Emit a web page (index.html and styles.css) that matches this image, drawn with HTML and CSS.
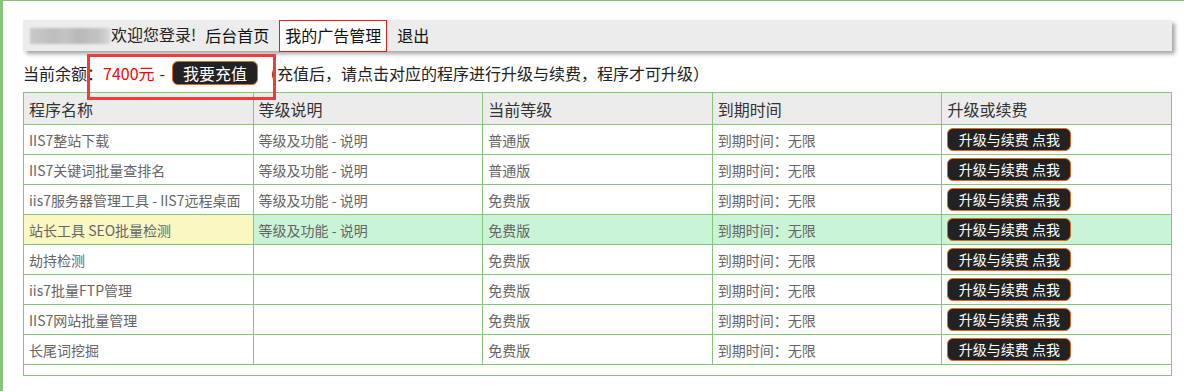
FILE: index.html
```html
<!DOCTYPE html>
<html lang="zh-CN">
<head>
<meta charset="utf-8">
<title>我的广告管理</title>
<link rel="stylesheet" href="styles.css">
</head>
<body>
<div class="page">
  <div class="nav">
    <span class="blur"></span>
    <span class="welcome">欢迎您登录!</span>
    <a class="link">后台首页</a>
    <a class="link active">我的广告管理</a>
    <a class="link">退出</a>
  </div>
  <div class="balance">
    <span>当前余额：</span>
    <span class="money">7400元</span>
    <span class="dash">-</span>
    <a class="btn recharge">我要充值</a>
    <span class="note">（充值后，请点击对应的程序进行升级与续费，程序才可升级）</span>
  </div>
  <div class="mark"></div>
  <table class="grid">
    <thead>
      <tr><th>程序名称</th><th>等级说明</th><th>当前等级</th><th>到期时间</th><th>升级或续费</th></tr>
    </thead>
    <tbody>
      <tr><td>IIS7整站下载</td><td>等级及功能 - 说明</td><td>普通版</td><td>到期时间：无限</td><td><a class="btn up">升级与续费 点我</a></td></tr>
      <tr><td>IIS7关键词批量查排名</td><td>等级及功能 - 说明</td><td>普通版</td><td>到期时间：无限</td><td><a class="btn up">升级与续费 点我</a></td></tr>
      <tr><td>iis7服务器管理工具 - IIS7远程桌面</td><td>等级及功能 - 说明</td><td>免费版</td><td>到期时间：无限</td><td><a class="btn up">升级与续费 点我</a></td></tr>
      <tr class="hl"><td class="first">站长工具 SEO批量检测</td><td>等级及功能 - 说明</td><td>免费版</td><td>到期时间：无限</td><td><a class="btn up">升级与续费 点我</a></td></tr>
      <tr><td>劫持检测</td><td></td><td>免费版</td><td>到期时间：无限</td><td><a class="btn up">升级与续费 点我</a></td></tr>
      <tr><td>iis7批量FTP管理</td><td></td><td>免费版</td><td>到期时间：无限</td><td><a class="btn up">升级与续费 点我</a></td></tr>
      <tr><td>IIS7网站批量管理</td><td></td><td>免费版</td><td>到期时间：无限</td><td><a class="btn up">升级与续费 点我</a></td></tr>
      <tr><td>长尾词挖掘</td><td></td><td>免费版</td><td>到期时间：无限</td><td><a class="btn up">升级与续费 点我</a></td></tr>
      <tr class="empty"><td colspan="5"></td></tr>
    </tbody>
  </table>
</div>
</body>
</html>
```
FILE: styles.css
```css
html, body {
  margin: 0;
  padding: 0;
  background: #fff;
}
body {
  font-family: "Noto Sans CJK SC", "Noto Sans", sans-serif;
  color: #222;
}
.page {
  position: relative;
  height: 391px;
  border-top: 1px solid #86c67a;
  border-left: 3px solid #86c67a;
  padding: 19px 12px 0 20px;
  box-sizing: border-box;
}
.nav {
  display: flex;
  align-items: stretch;
  height: 31px;
  background: #ececec;
  box-shadow: 3px 3px 4px rgba(0,0,0,0.35);
  padding-left: 7px;
  font-size: 16px;
  line-height: 29px;
}
.blur {
  align-self: center;
  width: 80px;
  height: 16px;
  margin-right: 1px;
  background: linear-gradient(90deg, #c9c9c9 0%, #bdbdbd 30%, #c4c4c4 45%, #b9b9b9 60%, #c2c2c2 85%, #d9d9d9 100%);
  filter: blur(1px);
}
.welcome {
  margin-right: 3px;
}
.link {
  padding: 0 5px;
  border: 1px solid transparent;
  margin-right: 4px;
  color: #111;
}
.link.active {
  border-color: #f01a1a;
  background: #fff;
  height: 30px;
}
.balance {
  display: flex;
  align-items: center;
  margin-top: 10px;
  height: 24px;
  font-size: 16px;
  line-height: 24px;
  color: #222;
}
.money {
  color: #ff0000;
}
.dash {
  margin: 0 7px 0 5px;
}
.btn {
  display: inline-block;
  background: #222;
  color: #fff;
  border: 1px solid #e4681c;
  border-radius: 6px;
  box-sizing: border-box;
  text-align: center;
}
.recharge {
  width: 86px;
  height: 24px;
  line-height: 22px;
  font-size: 16px;
}
.note {
  margin-left: 3px;
}
.mark {
  position: absolute;
  left: 84px;
  top: 53px;
  width: 189px;
  height: 46px;
  border: 3px solid #f23a3a;
  box-sizing: border-box;
}
.grid {
  margin-top: 7px;
  width: 1149px;
  table-layout: fixed;
  border-collapse: collapse;
  border: 1px solid #86c67a;
}
.grid th, .grid td {
  border: 1px solid #86c67a;
  padding: 0 5px;
  text-align: left;
  white-space: nowrap;
  overflow: hidden;
}
.grid th {
  height: 31px;
  background: #ececec;
  font-weight: normal;
  font-size: 16px;
  color: #333;
}
.grid td {
  height: 29px;
  font-size: 14px;
  color: #666;
}
.grid tr.hl td {
  background: #c9f4d6;
}
.grid tr.hl td.first {
  background: #fbf7c1;
}
.grid tr.empty td {
  height: 10px;
  padding: 0;
}
.up {
  width: 124px;
  height: 23px;
  line-height: 21px;
  font-size: 14px;
  color: #fff;
  vertical-align: middle;
}
```
